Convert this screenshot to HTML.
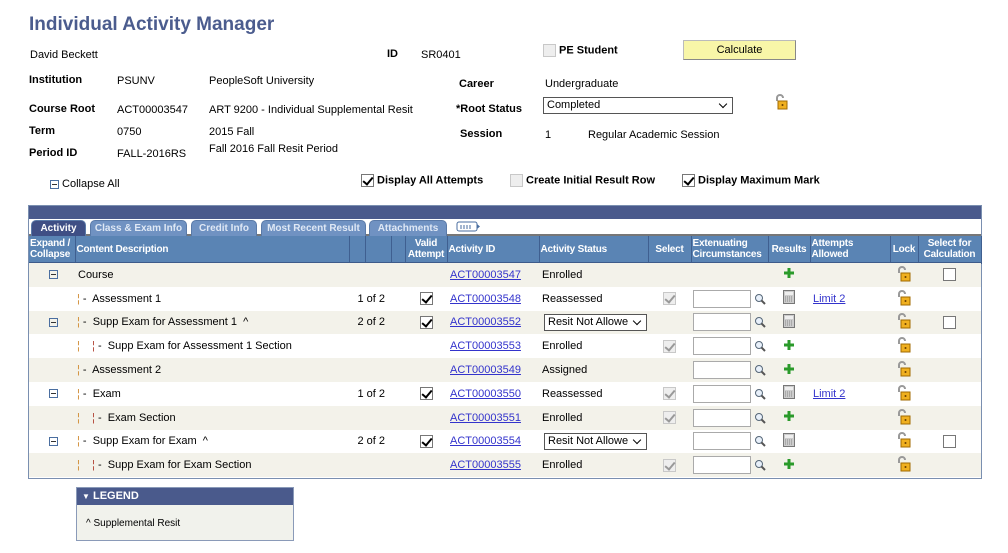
<!DOCTYPE html>
<html><head><meta charset="utf-8">
<style>
*{box-sizing:border-box;margin:0;padding:0}
body{width:1008px;height:553px;background:#fff;font-family:"Liberation Sans",Arial,sans-serif;font-size:11px;color:#000;position:relative;overflow:hidden}
.a{position:absolute;white-space:nowrap}
.b{font-weight:bold}
.lnk{color:#3333cc;text-decoration:underline}
.cb{display:inline-block;width:13px;height:13px;border:1px solid #777;background:#fff;vertical-align:middle;position:relative}
.cb.dis{border-color:#c8c8c8;background:#eee}
.chk::after{content:"";position:absolute;left:3px;top:0px;width:4px;height:8px;border:solid #000;border-width:0 2px 2px 0;transform:rotate(40deg)}
.chk.dis::after{border-color:#999}
table{border-collapse:collapse;table-layout:fixed;position:absolute;left:29px;top:236px;width:952px}
th{background:#5a84b4;color:#fff;font-size:10px;font-weight:bold;border-right:1px solid #3f5f90;border-bottom:2px solid #3d5b8a;height:27px;line-height:11px;text-align:left;padding:0 1px;vertical-align:middle;overflow:hidden;letter-spacing:-0.2px}
td{height:23.8px;padding:0;vertical-align:middle;white-space:nowrap}
tr.o td{background:#f3f2ea}
.box{position:absolute;left:28px;top:205px;width:954px;height:274px;border:1px solid #7a8fb0}
.inp{display:inline-block;width:58px;height:18px;border:1px solid #aaa;background:#fff;vertical-align:middle}
.sel{display:inline-block;width:103px;height:17px;border:1px solid #555;background:#fff;vertical-align:middle;font-size:11px;line-height:15px;padding-left:3px;position:relative;overflow:hidden}
.sel::after{content:"";position:absolute;right:6px;top:3px;width:5px;height:5px;border:solid #000;border-width:0 1.5px 1.5px 0;transform:rotate(45deg)}
.t1{color:#d08a30}.t2{color:#b04030}
.tab{position:absolute;top:220px;height:16px;border-radius:5px 5px 0 0;background:#7092c2;color:#dfe8f5;font-size:10px;font-weight:bold;text-align:center;line-height:16px;border:1px solid #5a7aa8;border-bottom:none;white-space:nowrap;overflow:hidden}
.min{display:inline-block;width:9px;height:9px;border:1px solid #4a6ea0;position:relative;vertical-align:middle}
.min::after{content:"";position:absolute;left:1px;top:3px;width:5px;height:1px;background:#333}
</style></head><body>

<div class="a b" style="left:29px;top:14px;font-size:19px;color:#4b5c8e">Individual Activity Manager</div>
<div class="a" style="left:30px;top:49px">David Beckett</div>
<div class="a b" style="left:387px;top:48px">ID</div>
<div class="a" style="left:421px;top:49px">SR0401</div>
<div class="a b" style="left:543px;top:44px"><span class="cb dis"></span> PE Student</div>
<div class="a" style="left:683px;top:40px;width:113px;height:20px;background:#f8f6a8;border:1px solid #bbb;border-right-color:#888;border-bottom-color:#888;text-align:center;line-height:18px">Calculate</div>

<div class="a b" style="left:29px;top:74px">Institution</div>
<div class="a" style="left:117px;top:75px">PSUNV</div>
<div class="a" style="left:209px;top:75px">PeopleSoft University</div>
<div class="a b" style="left:459px;top:78px">Career</div>
<div class="a" style="left:545px;top:78px">Undergraduate</div>

<div class="a b" style="left:29px;top:103px">Course Root</div>
<div class="a" style="left:117px;top:104px">ACT00003547</div>
<div class="a" style="left:209px;top:104px">ART 9200 - Individual Supplemental Resit</div>
<div class="a b" style="left:456px;top:103px">*Root Status</div>
<div class="a" style="left:543px;top:97px"><span class="sel" style="width:190px">Completed</span></div>

<div class="a b" style="left:29px;top:125px">Term</div>
<div class="a" style="left:117px;top:126px">0750</div>
<div class="a" style="left:209px;top:126px">2015 Fall</div>
<div class="a b" style="left:460px;top:128px">Session</div>
<div class="a" style="left:545px;top:129px">1</div>
<div class="a" style="left:588px;top:129px">Regular Academic Session</div>

<div class="a b" style="left:29px;top:147px">Period ID</div>
<div class="a" style="left:117px;top:148px">FALL-2016RS</div>
<div class="a" style="left:209px;top:143px">Fall 2016 Fall Resit Period</div>

<div class="a" style="left:50px;top:178px;font-size:11px"><span class="min"></span> Collapse All</div>
<div class="a b" style="left:361px;top:174px"><span class="cb chk"></span> Display All Attempts</div>
<div class="a b" style="left:510px;top:174px"><span class="cb dis"></span> Create Initial Result Row</div>
<div class="a b" style="left:682px;top:174px"><span class="cb chk"></span> Display Maximum Mark</div>

<svg class="a" style="left:773px;top:94px" width="16" height="16" viewBox="0 0 16 16"><path d="M4 7V4a3 3 0 0 1 6 0" fill="none" stroke="#999" stroke-width="2"/><rect x="5" y="7" width="9" height="8" fill="#f0b020" stroke="#a06a00"/><circle cx="9.5" cy="11" r="1" fill="#6a4000"/></svg>

<div class="box"></div>
<div class="a" style="left:29px;top:206px;width:952px;height:13px;background:#4a5a8c"></div>
<div class="a" style="left:29px;top:219px;width:952px;height:17px;background:#fff;border-bottom:2px solid #777"></div>
<div class="tab" style="left:31px;width:55px;background:#3f4f85;color:#fff">Activity</div>
<div class="tab" style="left:90px;width:97px">Class &amp; Exam Info</div>
<div class="tab" style="left:191px;width:66px">Credit Info</div>
<div class="tab" style="left:261px;width:105px">Most Recent Result</div>
<div class="tab" style="left:369px;width:78px">Attachments</div>
<svg class="a" style="left:456px;top:221px" width="26" height="12"><rect x="1" y="1" width="20" height="9" rx="2" fill="#fff" stroke="#4a6ea0"/><path d="M4 5h12M4 7h12" stroke="#4a6ea0" stroke-dasharray="2 1"/><path d="M21 3l3 2.5-3 2.5z" fill="#4a6ea0"/></svg>

<table>
<colgroup><col style="width:46px"><col style="width:274px"><col style="width:16px"><col style="width:26px"><col style="width:14px"><col style="width:42px"><col style="width:92px"><col style="width:109px"><col style="width:43px"><col style="width:77px"><col style="width:42px"><col style="width:80px"><col style="width:28px"><col style="width:63px"></colgroup>
<tr><th>Expand /<br>Collapse</th><th>Content Description</th><th></th><th></th><th></th><th style="text-align:center">Valid<br>Attempt</th><th>Activity ID</th><th>Activity Status</th><th style="text-align:center">Select</th><th>Extenuating<br>Circumstances</th><th style="text-align:center">Results</th><th>Attempts<br>Allowed</th><th style="text-align:center">Lock</th><th style="text-align:center">Select for<br>Calculation</th></tr>
</table>

<table style="top:263px" id="body">
<colgroup><col style="width:46px"><col style="width:274px"><col style="width:16px"><col style="width:26px"><col style="width:14px"><col style="width:42px"><col style="width:92px"><col style="width:109px"><col style="width:43px"><col style="width:77px"><col style="width:42px"><col style="width:80px"><col style="width:28px"><col style="width:63px"></colgroup>
<tr class="o"><td style="padding-left:20px"><span class="min"></span></td><td style="padding-left:3px">Course</td><td colspan="3"></td><td></td><td><span class="lnk" style="padding-left:3px">ACT00003547</span></td><td style="padding-left:3px">Enrolled</td><td></td><td></td><td style="text-align:center"><svg width="10" height="10"><path d="M3.5 0h3v3.5H10v3H6.5V10h-3V6.5H0v-3h3.5z" fill="#2a9a2a"/></svg></td><td></td><td style="text-align:center"><svg width="16" height="17" viewBox="0 0 16 17"><path d="M3 8V5a3 3 0 0 1 6 0" fill="none" stroke="#999" stroke-width="2"/><rect x="5" y="8" width="9" height="8" fill="#f0b020" stroke="#a06a00"/><circle cx="9.5" cy="12" r="1" fill="#6a4000"/></svg></td><td style="text-align:center"><span class="cb"></span></td></tr>
<tr><td></td><td style="padding-left:2px"><span class="t1">¦</span> -&nbsp; Assessment 1</td><td colspan="3" style="text-align:right;padding-right:20px">1 of 2</td><td style="text-align:center"><span class="cb chk"></span></td><td><span class="lnk" style="padding-left:3px">ACT00003548</span></td><td style="padding-left:3px">Reassessed</td><td style="text-align:center"><span class="cb chk dis"></span></td><td style="padding-left:2px"><span class="inp"></span> <svg width="12" height="12" style="vertical-align:middle"><circle cx="5" cy="5" r="3.5" fill="#e8f0fa" stroke="#567"/><path d="M7.5 7.5l3.5 3.5" stroke="#555" stroke-width="2"/></svg></td><td style="text-align:center"><svg width="12" height="14"><rect x=".5" y=".5" width="11" height="13" fill="#ccc" stroke="#777"/><rect x="2" y="2" width="8" height="3" fill="#eee"/><path d="M2 7h8M2 9h8M2 11h8" stroke="#888" stroke-dasharray="1 1"/></svg></td><td><span class="lnk" style="padding-left:3px">Limit 2</span></td><td style="text-align:center"><svg width="16" height="17" viewBox="0 0 16 17"><path d="M3 8V5a3 3 0 0 1 6 0" fill="none" stroke="#999" stroke-width="2"/><rect x="5" y="8" width="9" height="8" fill="#f0b020" stroke="#a06a00"/><circle cx="9.5" cy="12" r="1" fill="#6a4000"/></svg></td><td></td></tr>
<tr class="o"><td style="padding-left:20px"><span class="min"></span></td><td style="padding-left:2px"><span class="t1">¦</span> -&nbsp; Supp Exam for Assessment 1&nbsp; ^</td><td colspan="3" style="text-align:right;padding-right:20px">2 of 2</td><td style="text-align:center"><span class="cb chk"></span></td><td><span class="lnk" style="padding-left:3px">ACT00003552</span></td><td style="padding-left:5px"><span class="sel">Resit Not Allowe</span></td><td></td><td style="padding-left:2px"><span class="inp"></span> <svg width="12" height="12" style="vertical-align:middle"><circle cx="5" cy="5" r="3.5" fill="#e8f0fa" stroke="#567"/><path d="M7.5 7.5l3.5 3.5" stroke="#555" stroke-width="2"/></svg></td><td style="text-align:center"><svg width="12" height="14"><rect x=".5" y=".5" width="11" height="13" fill="#ccc" stroke="#777"/><rect x="2" y="2" width="8" height="3" fill="#eee"/><path d="M2 7h8M2 9h8M2 11h8" stroke="#888" stroke-dasharray="1 1"/></svg></td><td></td><td style="text-align:center"><svg width="16" height="17" viewBox="0 0 16 17"><path d="M3 8V5a3 3 0 0 1 6 0" fill="none" stroke="#999" stroke-width="2"/><rect x="5" y="8" width="9" height="8" fill="#f0b020" stroke="#a06a00"/><circle cx="9.5" cy="12" r="1" fill="#6a4000"/></svg></td><td style="text-align:center"><span class="cb"></span></td></tr>
<tr><td></td><td style="padding-left:2px"><span class="t1">¦</span>&nbsp;&nbsp;&nbsp; <span class="t2">¦</span> -&nbsp; Supp Exam for Assessment 1 Section</td><td colspan="3"></td><td></td><td><span class="lnk" style="padding-left:3px">ACT00003553</span></td><td style="padding-left:3px">Enrolled</td><td style="text-align:center"><span class="cb chk dis"></span></td><td style="padding-left:2px"><span class="inp"></span> <svg width="12" height="12" style="vertical-align:middle"><circle cx="5" cy="5" r="3.5" fill="#e8f0fa" stroke="#567"/><path d="M7.5 7.5l3.5 3.5" stroke="#555" stroke-width="2"/></svg></td><td style="text-align:center"><svg width="10" height="10"><path d="M3.5 0h3v3.5H10v3H6.5V10h-3V6.5H0v-3h3.5z" fill="#2a9a2a"/></svg></td><td></td><td style="text-align:center"><svg width="16" height="17" viewBox="0 0 16 17"><path d="M3 8V5a3 3 0 0 1 6 0" fill="none" stroke="#999" stroke-width="2"/><rect x="5" y="8" width="9" height="8" fill="#f0b020" stroke="#a06a00"/><circle cx="9.5" cy="12" r="1" fill="#6a4000"/></svg></td><td></td></tr>
<tr class="o"><td></td><td style="padding-left:2px"><span class="t1">¦</span> -&nbsp; Assessment 2</td><td colspan="3"></td><td></td><td><span class="lnk" style="padding-left:3px">ACT00003549</span></td><td style="padding-left:3px">Assigned</td><td></td><td style="padding-left:2px"><span class="inp"></span> <svg width="12" height="12" style="vertical-align:middle"><circle cx="5" cy="5" r="3.5" fill="#e8f0fa" stroke="#567"/><path d="M7.5 7.5l3.5 3.5" stroke="#555" stroke-width="2"/></svg></td><td style="text-align:center"><svg width="10" height="10"><path d="M3.5 0h3v3.5H10v3H6.5V10h-3V6.5H0v-3h3.5z" fill="#2a9a2a"/></svg></td><td></td><td style="text-align:center"><svg width="16" height="17" viewBox="0 0 16 17"><path d="M3 8V5a3 3 0 0 1 6 0" fill="none" stroke="#999" stroke-width="2"/><rect x="5" y="8" width="9" height="8" fill="#f0b020" stroke="#a06a00"/><circle cx="9.5" cy="12" r="1" fill="#6a4000"/></svg></td><td></td></tr>
<tr><td style="padding-left:20px"><span class="min"></span></td><td style="padding-left:2px"><span class="t1">¦</span> -&nbsp; Exam</td><td colspan="3" style="text-align:right;padding-right:20px">1 of 2</td><td style="text-align:center"><span class="cb chk"></span></td><td><span class="lnk" style="padding-left:3px">ACT00003550</span></td><td style="padding-left:3px">Reassessed</td><td style="text-align:center"><span class="cb chk dis"></span></td><td style="padding-left:2px"><span class="inp"></span> <svg width="12" height="12" style="vertical-align:middle"><circle cx="5" cy="5" r="3.5" fill="#e8f0fa" stroke="#567"/><path d="M7.5 7.5l3.5 3.5" stroke="#555" stroke-width="2"/></svg></td><td style="text-align:center"><svg width="12" height="14"><rect x=".5" y=".5" width="11" height="13" fill="#ccc" stroke="#777"/><rect x="2" y="2" width="8" height="3" fill="#eee"/><path d="M2 7h8M2 9h8M2 11h8" stroke="#888" stroke-dasharray="1 1"/></svg></td><td><span class="lnk" style="padding-left:3px">Limit 2</span></td><td style="text-align:center"><svg width="16" height="17" viewBox="0 0 16 17"><path d="M3 8V5a3 3 0 0 1 6 0" fill="none" stroke="#999" stroke-width="2"/><rect x="5" y="8" width="9" height="8" fill="#f0b020" stroke="#a06a00"/><circle cx="9.5" cy="12" r="1" fill="#6a4000"/></svg></td><td></td></tr>
<tr class="o"><td></td><td style="padding-left:2px"><span class="t1">¦</span>&nbsp;&nbsp;&nbsp; <span class="t2">¦</span> -&nbsp; Exam Section</td><td colspan="3"></td><td></td><td><span class="lnk" style="padding-left:3px">ACT00003551</span></td><td style="padding-left:3px">Enrolled</td><td style="text-align:center"><span class="cb chk dis"></span></td><td style="padding-left:2px"><span class="inp"></span> <svg width="12" height="12" style="vertical-align:middle"><circle cx="5" cy="5" r="3.5" fill="#e8f0fa" stroke="#567"/><path d="M7.5 7.5l3.5 3.5" stroke="#555" stroke-width="2"/></svg></td><td style="text-align:center"><svg width="10" height="10"><path d="M3.5 0h3v3.5H10v3H6.5V10h-3V6.5H0v-3h3.5z" fill="#2a9a2a"/></svg></td><td></td><td style="text-align:center"><svg width="16" height="17" viewBox="0 0 16 17"><path d="M3 8V5a3 3 0 0 1 6 0" fill="none" stroke="#999" stroke-width="2"/><rect x="5" y="8" width="9" height="8" fill="#f0b020" stroke="#a06a00"/><circle cx="9.5" cy="12" r="1" fill="#6a4000"/></svg></td><td></td></tr>
<tr><td style="padding-left:20px"><span class="min"></span></td><td style="padding-left:2px"><span class="t1">¦</span> -&nbsp; Supp Exam for Exam&nbsp; ^</td><td colspan="3" style="text-align:right;padding-right:20px">2 of 2</td><td style="text-align:center"><span class="cb chk"></span></td><td><span class="lnk" style="padding-left:3px">ACT00003554</span></td><td style="padding-left:5px"><span class="sel">Resit Not Allowe</span></td><td></td><td style="padding-left:2px"><span class="inp"></span> <svg width="12" height="12" style="vertical-align:middle"><circle cx="5" cy="5" r="3.5" fill="#e8f0fa" stroke="#567"/><path d="M7.5 7.5l3.5 3.5" stroke="#555" stroke-width="2"/></svg></td><td style="text-align:center"><svg width="12" height="14"><rect x=".5" y=".5" width="11" height="13" fill="#ccc" stroke="#777"/><rect x="2" y="2" width="8" height="3" fill="#eee"/><path d="M2 7h8M2 9h8M2 11h8" stroke="#888" stroke-dasharray="1 1"/></svg></td><td></td><td style="text-align:center"><svg width="16" height="17" viewBox="0 0 16 17"><path d="M3 8V5a3 3 0 0 1 6 0" fill="none" stroke="#999" stroke-width="2"/><rect x="5" y="8" width="9" height="8" fill="#f0b020" stroke="#a06a00"/><circle cx="9.5" cy="12" r="1" fill="#6a4000"/></svg></td><td style="text-align:center"><span class="cb"></span></td></tr>
<tr class="o"><td></td><td style="padding-left:2px"><span class="t1">¦</span>&nbsp;&nbsp;&nbsp; <span class="t2">¦</span> -&nbsp; Supp Exam for Exam Section</td><td colspan="3"></td><td></td><td><span class="lnk" style="padding-left:3px">ACT00003555</span></td><td style="padding-left:3px">Enrolled</td><td style="text-align:center"><span class="cb chk dis"></span></td><td style="padding-left:2px"><span class="inp"></span> <svg width="12" height="12" style="vertical-align:middle"><circle cx="5" cy="5" r="3.5" fill="#e8f0fa" stroke="#567"/><path d="M7.5 7.5l3.5 3.5" stroke="#555" stroke-width="2"/></svg></td><td style="text-align:center"><svg width="10" height="10"><path d="M3.5 0h3v3.5H10v3H6.5V10h-3V6.5H0v-3h3.5z" fill="#2a9a2a"/></svg></td><td></td><td style="text-align:center"><svg width="16" height="17" viewBox="0 0 16 17"><path d="M3 8V5a3 3 0 0 1 6 0" fill="none" stroke="#999" stroke-width="2"/><rect x="5" y="8" width="9" height="8" fill="#f0b020" stroke="#a06a00"/><circle cx="9.5" cy="12" r="1" fill="#6a4000"/></svg></td><td></td></tr>
</table>

<div class="a" style="left:76px;top:487px;width:218px;height:54px;border:1px solid #8a9ab8;background:#f1f2ec"></div>
<div class="a b" style="left:77px;top:488px;width:216px;height:17px;background:#4a5a8c;color:#fff;font-size:11px;line-height:17px;padding-left:5px"><span style="font-size:8px">▼</span> LEGEND</div>
<div class="a" style="left:86px;top:518px;font-size:10px">^ Supplemental Resit</div>

</body></html>
